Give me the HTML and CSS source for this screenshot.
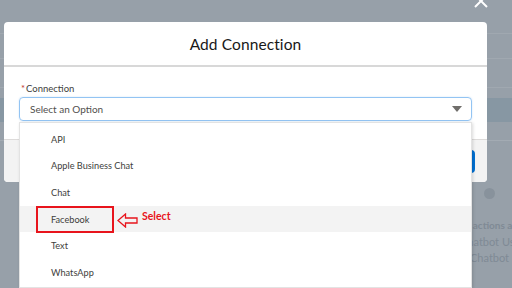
FILE: index.html
```html
<!DOCTYPE html>
<html>
<head>
<meta charset="utf-8">
<link rel="stylesheet" href="styles.css">
</head>
<body>
<div class="page">
  <div class="row r1"></div>
  <div class="row r2"></div>
  <div class="row r3"></div>
  <div class="band"></div>
  <div class="row r4"></div>
  <div class="side">
    <span class="dot"></span>
    <div class="side-title">Available actions and</div>
    <div class="side-item">Chatbot User</div>
    <div class="side-item">Chatbot User</div>
  </div>
</div>

<svg class="close" width="14" height="14" viewBox="0 0 14 14"><path d="M1 1 L13 13 M13 1 L1 13" stroke="#fff" stroke-width="2" fill="none"/></svg>

<div class="modal">
  <div class="modal-header">Add Connection</div>
  <div class="modal-body">
    <div class="label"><span class="req">*</span>Connection</div>
    <div class="combo">
      <div class="select">
        <span>Select an Option</span>
        <svg width="10" height="6" viewBox="0 0 10 6"><path d="M0 0 H10 L5 6 Z" fill="#706e6b"/></svg>
      </div>
      <ul class="dropdown">
        <li>API</li>
        <li>Apple Business Chat</li>
        <li>Chat</li>
        <li class="hover"><span class="mark">Facebook</span>
          <span class="note">
            <svg width="21" height="15" viewBox="0 0 21 15"><path d="M1 7.5 L8.5 1 L8.5 5 L20 5 L20 10 L8.5 10 L8.5 14 Z" fill="none" stroke="#e8141c" stroke-width="1.3" stroke-linejoin="miter"/></svg>
            <b>Select</b>
          </span>
        </li>
        <li>Text</li>
        <li>WhatsApp</li>
      </ul>
    </div>
  </div>
  <div class="modal-footer"><span class="btn"></span></div>
</div>
</body>
</html>
```

FILE: styles.css
```css
html, body {
  margin: 0;
  padding: 0;
}
body {
  width: 512px;
  height: 288px;
  overflow: hidden;
  position: relative;
  background: #97a0a9;
  font-family: Lato, "Open Sans", sans-serif;
}
.page {
  display: flex;
  flex-direction: column;
  height: 288px;
  overflow: hidden;
}
.row {
  border-bottom: 1px solid #a0a8b0;
}
.r1 { height: 33px; }
.r2 { height: 24px; }
.r3 { height: 28px; }
.band {
  margin-top: 10px;
  height: 24px;
  background: #8797a3;
}
.r4 { height: 18px; border-bottom: 1px solid #a3abb3; }
.side {
  margin-left: 468px;
  padding-top: 47px;
  display: flex;
  flex-direction: column;
  color: #7f8a95;
  font-size: 10px;
  white-space: nowrap;
}
.dot {
  width: 11px;
  height: 11px;
  border-radius: 50%;
  background: #88929c;
  margin-left: 16px;
  margin-bottom: 20px;
}
.side-title {
  font-weight: bold;
  margin-left: -38px;
  height: 16px;
}
.side-item {
  font-size: 11px;
  height: 16px;
  margin-left: -8px;
}
.side-item + .side-item {
  margin-left: 2px;
}
.close {
  position: absolute;
  left: 474px;
  top: -6px;
}
.modal {
  position: absolute;
  left: 4px;
  top: 22px;
  width: 483px;
  height: 160px;
  background: #fff;
  border-radius: 4px;
  display: flex;
  flex-direction: column;
}
.modal-header {
  height: 43px;
  border-bottom: 2px solid #d8d8d8;
  display: flex;
  align-items: center;
  justify-content: center;
  font-size: 15.5px;
  color: #181818;
  letter-spacing: 0.1px;
}
.modal-body {
  height: 72px;
  padding: 16px 15px 0 15px;
  box-sizing: border-box;
}
.label {
  font-size: 9.5px;
  color: #3e3e3c;
  height: 14px;
  line-height: 12px;
}
.req {
  color: #c23934;
  margin: 0 1px 0 2px;
}
.combo {
  position: relative;
}
.select {
  height: 24px;
  box-sizing: border-box;
  border: 1px solid #93c4f3;
  border-radius: 4px;
  box-shadow: 0 0 2px #cfe3f8;
  display: flex;
  align-items: center;
  justify-content: space-between;
  padding: 0 9px 0 10px;
  font-size: 10px;
  color: #514f4d;
}
.dropdown {
  position: absolute;
  left: 0;
  top: 25px;
  width: 453px;
  margin: 0;
  padding: 3px 0 0 0;
  list-style: none;
  background: #fff;
  border: 1px solid #e3e3e3;
  box-sizing: border-box;
  height: 166px;
  box-shadow: 1px 1px 3px rgba(0,0,0,0.15);
  font-size: 9.2px;
  color: #3e3e3c;
}
.dropdown li {
  height: 26.6px;
  display: flex;
  align-items: center;
  padding-left: 31px;
}
.dropdown li.hover {
  background: #f3f3f3;
  padding-left: 16px;
}
.mark {
  box-sizing: border-box;
  width: 78px;
  height: 27px;
  border: 2px solid #e8141c;
  display: flex;
  align-items: center;
  padding-left: 13px;
}
.note {
  display: flex;
  align-items: center;
  gap: 4px;
  margin-left: 3px;
  color: #e8141c;
  font-size: 10.5px;
}
.note svg {
  margin-top: 2px;
}
.note b {
  margin-top: -6px;
}
.modal-footer {
  flex: 1;
  background: #f3f3f3;
  border-top: 1px solid #dddbda;
  border-radius: 0 0 4px 4px;
  display: flex;
  align-items: center;
  justify-content: flex-end;
  padding-right: 12px;
}
.btn {
  width: 40px;
  height: 23px;
  background: #0070d2;
  border-radius: 4px;
}
```
